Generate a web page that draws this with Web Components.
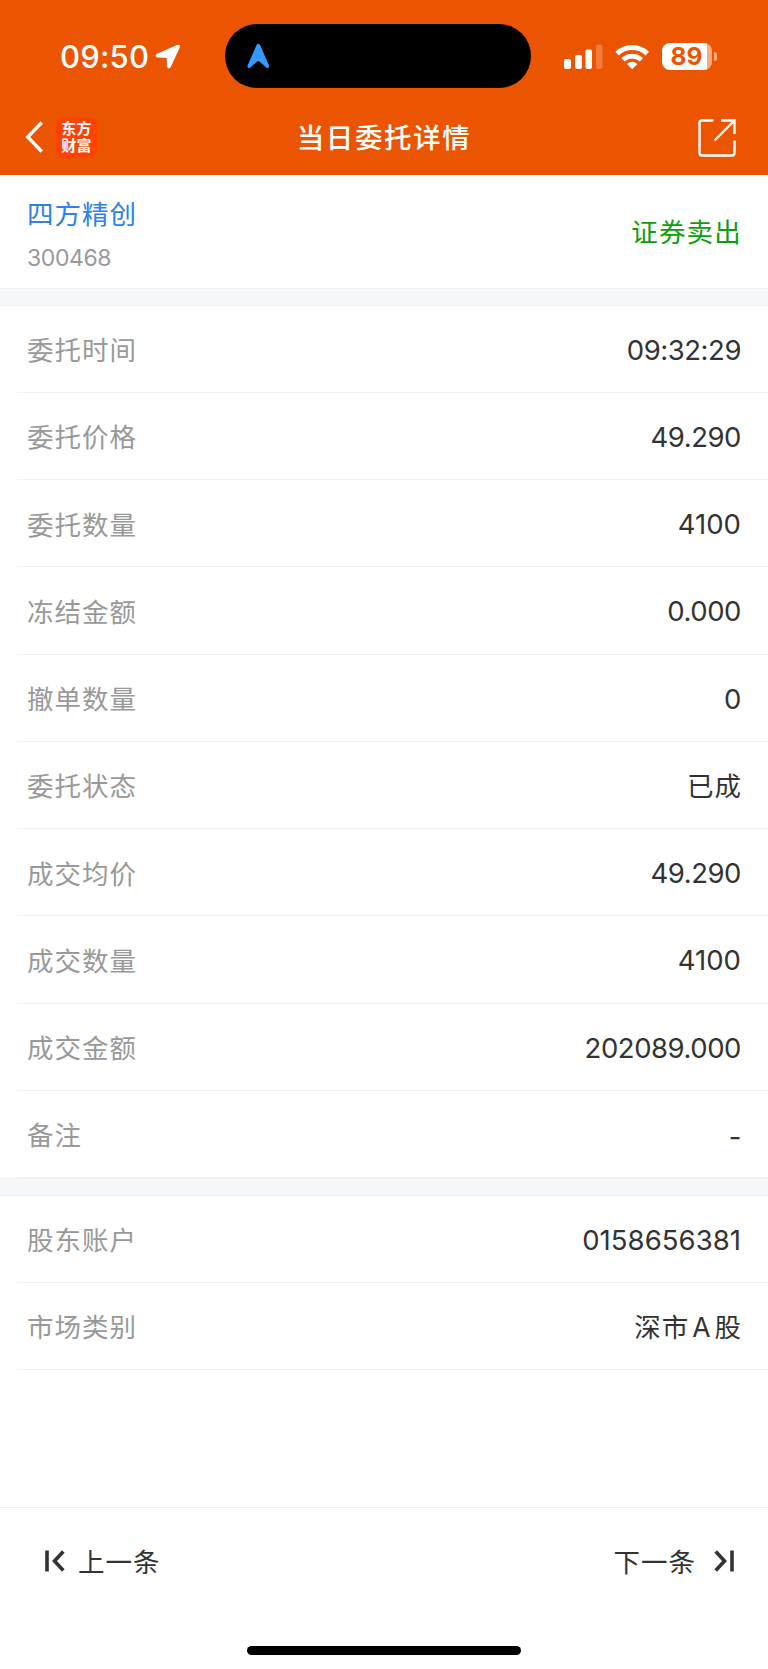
<!DOCTYPE html>
<html lang="zh-CN">
<head>
<meta charset="utf-8">
<meta name="viewport" content="width=device-width, initial-scale=1">
<title>当日委托详情</title>
<style>
  body {
    margin: 0;
    background: #fff;
    color: #333;
    font-family: Inter, "Noto Sans CJK SC", sans-serif;
  }
</style>
</head>
<body>
<order-page>
  <status-bar slot="header" time="09:50" battery="89"></status-bar>
  <nav-bar slot="header">当日委托详情</nav-bar>

  <stock-summary name="四方精创" code="300468">证券卖出</stock-summary>

  <detail-group>
    <detail-row label="委托时间">09:32:29</detail-row>
    <detail-row label="委托价格">49.290</detail-row>
    <detail-row label="委托数量" whole>4100</detail-row>
    <detail-row label="冻结金额">0.000</detail-row>
    <detail-row label="撤单数量">0</detail-row>
    <detail-row label="委托状态" cjk>已成</detail-row>
    <detail-row label="成交均价">49.290</detail-row>
    <detail-row label="成交数量" whole>4100</detail-row>
    <detail-row label="成交金额">202089.000</detail-row>
    <detail-row label="备注" empty>-</detail-row>
  </detail-group>

  <detail-group>
    <detail-row label="股东账户" whole>0158656381</detail-row>
    <detail-row label="市场类别" cjk>深市<span>A</span>股</detail-row>
  </detail-group>

  <pager-bar slot="footer"></pager-bar>
</order-page>

<script>
class OrderPageElement extends HTMLElement {
  constructor() {
    super();
    this.attachShadow({ mode: "open" });
    this.shadowRoot.innerHTML = `
      <style>
        :host { display: flex; flex-direction: column; height: 1669px; overflow: hidden; }
        header { height: 175px; flex: none; background: #eb5502; color: #fff; }
        main { flex: 1; min-height: 0; }
      </style>
      <header><slot name="header"></slot></header>
      <main><slot></slot></main>
      <slot name="footer"></slot>`;
  }
}

class StatusBarElement extends HTMLElement {
  constructor() {
    super();
    this.attachShadow({ mode: "open" });
  }

  connectedCallback() {
    this.shadowRoot.innerHTML = `
      <style>
        :host {
          display: grid;
          grid-template-columns: 225px 306px 1fr;
          height: 100px;
          padding-top: 12px;
          box-sizing: border-box;
        }
        svg { display: block; flex: none; }
        .left { display: flex; align-items: center; height: 90px; padding-left: 60px; }
        .time { width: 95px; padding-bottom: 1px; font-size: 31px; font-weight: 550; line-height: 1; letter-spacing: .2px; white-space: nowrap; }
        .island { display: flex; height: 64px; margin-top: 12px; padding-left: 22px; border-radius: 32px; background: #000; box-sizing: border-box; }
        .island svg { margin-top: 18.5px; }
        .right { display: flex; align-items: center; height: 89px; padding-left: 32.5px; }
        .wifi { margin-left: 12px; }
        .battery { display: flex; align-items: center; margin-left: 12.5px; }
        .cell {
          width: 50px; height: 27px; border-radius: 8px; padding-right: 1px; box-sizing: border-box;
          background: linear-gradient(90deg, #fff 45px, #f6aa80 45px);
          color: #eb5502; font-size: 24.5px; font-weight: 700; line-height: 27px; text-align: center;
        }
        .nub { width: 3px; height: 9px; margin-left: 1.5px; border-radius: 0 4px 4px 0; background: #f6aa80; }
      </style>
      <div class="left">
        <span class="time">${this.getAttribute("time")}</span>
        <svg width="26" height="26" viewBox="0 0 26 26" fill="#fff" stroke="#fff" stroke-width="1.2" stroke-linejoin="round"><path d="M2.3 10.2 22.2 1.5Q25 .8 24.1 3.6L15.2 22.8Q13.8 25 12.6 22.7L12.4 15Q12.3 13.3 10.8 13.2L2.3 12.9Q.2 11.6 2.3 10.2Z"/></svg>
      </div>
      <div class="island">
        <svg width="23" height="26" viewBox="0 0 23 26" fill="#3399ff"><path d="M9.4 2.3Q11.3-.6 13.2 2.3L22 22.5Q22.6 25.8 19.6 24.7L12.4 18.6Q11.3 17.8 10.2 18.6L3 24.7Q-.1 25.8.6 22.5Z"/></svg>
      </div>
      <div class="right">
        <svg width="39" height="26" viewBox="0 0 39 26" fill="#fff">
          <rect x="0" y="15" width="7" height="10" rx="2"/>
          <rect x="11" y="11" width="7" height="14" rx="2"/>
          <rect x="21.5" y="5.5" width="6.5" height="19.5" rx="2"/>
          <rect x="32" y=".5" width="6.5" height="24.5" rx="2" opacity=".22"/>
        </svg>
        <svg class="wifi" width="35" height="26" viewBox="0 0 35 26" fill="none">
          <path d="M2.1 9.6A22 22 0 0 1 32.3 9.6" stroke="#fff" stroke-width="5"/>
          <path d="M8 15.7A13.5 13.5 0 0 1 26.4 15.7" stroke="#fff" stroke-width="4.8"/>
          <path d="M12 20Q17.2 15.4 22.4 20L17.8 24.7Q17.2 25.2 16.6 24.7Z" fill="#fff"/>
        </svg>
        <div class="battery"><div class="cell">${this.getAttribute("battery")}</div><div class="nub"></div></div>
      </div>`;
  }
}

class NavBarElement extends HTMLElement {
  constructor() {
    super();
    this.attachShadow({ mode: "open" });
    this.shadowRoot.innerHTML = `
      <style>
        :host {
          display: grid;
          grid-template-columns: 1fr auto 1fr;
          align-items: center;
          height: 74px;
          padding: 0 32px 0 25px;
          box-sizing: border-box;
        }
        svg { display: block; }
        .left { display: flex; align-items: center; gap: 13px; }
        .logo {
          width: 41px; height: 41px; padding-top: 3px; border-radius: 8px; box-sizing: border-box;
          background: #ff4200;
          font: 700 15px/17.5px "Liberation Sans", "Noto Sans CJK SC", sans-serif;
          letter-spacing: .3px; text-align: center;
        }
        .logo div { height: 17.5px; overflow: hidden; }
        h1 { margin: 0 0 0 7px; padding-top: 1px; font-size: 27.5px; font-weight: 500; line-height: 40px; letter-spacing: 1.6px; }
        .share { justify-self: end; margin-top: 1px; }
      </style>
      <div class="left">
        <svg width="18" height="32" viewBox="0 0 18 32" fill="none" stroke="#fff" stroke-width="3.3"><path d="M16.7 1.5 2.7 16 16.7 30.5"/></svg>
        <div class="logo"><div>东方</div><div>财富</div></div>
      </div>
      <h1><slot></slot></h1>
      <svg class="share" width="38" height="38" viewBox="0 0 38 38" fill="none" stroke="#fff" stroke-width="2.4">
        <path d="M15.5 1.5H4Q1.5 1.5 1.5 4V34Q1.5 36.5 4 36.5H34Q36.5 36.5 36.5 34V21.5M23 1.5H36.5V15M36.5 1.5 16.5 21.5"/>
      </svg>`;
  }
}

class StockSummaryElement extends HTMLElement {
  constructor() {
    super();
    this.attachShadow({ mode: "open" });
  }

  connectedCallback() {
    this.shadowRoot.innerHTML = `
      <style>
        :host {
          display: flex;
          justify-content: space-between;
          align-items: center;
          height: 113px;
          padding: 0 26px 0 27px;
          box-sizing: border-box;
        }
        .name { margin-top: 7px; color: #2f80e8; font-size: 26.5px; line-height: 40px; letter-spacing: 1px; }
        .code { margin-top: 6px; color: #999; font-size: 23px; line-height: 36px; letter-spacing: -.4px; }
        .side { color: #0aa00a; font-size: 26.5px; line-height: 40px; letter-spacing: 1.2px; }
      </style>
      <div>
        <div class="name">${this.getAttribute("name")}</div>
        <div class="code">${this.getAttribute("code")}</div>
      </div>
      <div class="side"><slot></slot></div>`;
  }
}

class DetailGroupElement extends HTMLElement {
  constructor() {
    super();
    this.attachShadow({ mode: "open" });
    this.shadowRoot.innerHTML = `
      <style>
        :host { display: block; }
        .gap { height: 17.5px; border: solid #f0f1f3; border-width: 1px 0; box-sizing: border-box; background: #f6f7f9; }
      </style>
      <div class="gap"></div>
      <slot></slot>`;
  }
}

class DetailRowElement extends HTMLElement {
  constructor() {
    super();
    this.attachShadow({ mode: "open" });
  }

  connectedCallback() {
    this.shadowRoot.innerHTML = `
      <style>
        :host { display: block; padding-left: 17px; }
        .row {
          display: flex;
          justify-content: space-between;
          align-items: center;
          height: 87.25px;
          padding: 0 27px 0 10px;
          border-bottom: 1px solid #f3f3f4;
          box-sizing: border-box;
        }
        .label { color: #999; font-size: 26.5px; letter-spacing: 1px; }
        .value { padding-top: 2px; font-size: 27.5px; letter-spacing: -.45px; }
        :host([whole]) .value { letter-spacing: .05px; }
        :host([empty]) .value { padding-top: 6px; }
        :host([cjk]) .value { margin-right: -1px; padding-top: 0; font-size: 26.5px; letter-spacing: 1px; }
        ::slotted(span) { margin: 0 3px; }
      </style>
      <div class="row">
        <span class="label">${this.getAttribute("label")}</span>
        <span class="value"><slot></slot></span>
      </div>`;
  }
}

class PagerBarElement extends HTMLElement {
  constructor() {
    super();
    this.attachShadow({ mode: "open" });
    this.shadowRoot.innerHTML = `
      <style>
        :host {
          display: flex;
          flex-direction: column;
          flex: none;
          height: 162px;
          border-top: 1px solid #eeeeef;
          box-sizing: border-box;
        }
        nav { display: flex; justify-content: space-between; align-items: center; height: 105px; padding: 0 34px 0 45px; }
        .item { display: flex; align-items: center; gap: 13px; font-size: 26.5px; letter-spacing: 1px; }
        .next { gap: 18px; }
        svg { display: block; }
        .home { width: 274px; height: 9px; margin: 33px auto 0; border-radius: 5px; background: #000; }
      </style>
      <nav>
        <div class="item">
          <svg width="20" height="22" viewBox="0 0 20 22" fill="none" stroke="#333" stroke-width="3.6"><path d="M2 .6V21.4M18.3 1.5 9.5 11 18.3 20.5"/></svg>
          <span>上一条</span>
        </div>
        <div class="item next">
          <span>下一条</span>
          <svg width="20" height="22" viewBox="0 0 20 22" fill="none" stroke="#333" stroke-width="3.6"><path d="M18 .6V21.4M1.7 1.5 10.5 11 1.7 20.5"/></svg>
        </div>
      </nav>
      <div class="home"></div>`;
  }
}

customElements.define("order-page", OrderPageElement);
customElements.define("status-bar", StatusBarElement);
customElements.define("nav-bar", NavBarElement);
customElements.define("stock-summary", StockSummaryElement);
customElements.define("detail-group", DetailGroupElement);
customElements.define("detail-row", DetailRowElement);
customElements.define("pager-bar", PagerBarElement);
</script>
</body>
</html>
